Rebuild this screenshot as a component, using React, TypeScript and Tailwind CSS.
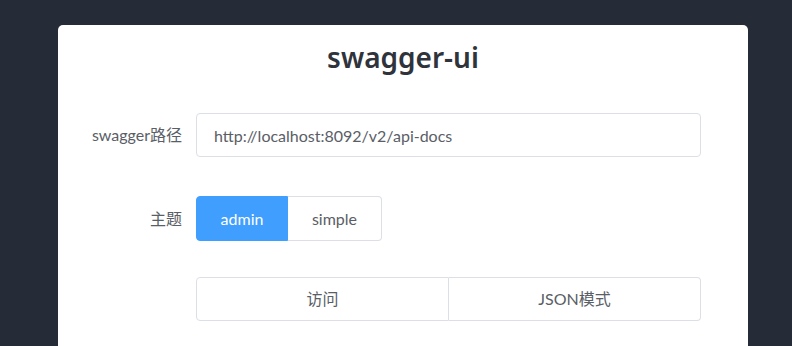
import { useState } from "react";

const font = "font-['Lato','Noto_Sans_CJK_SC',sans-serif]";

export default function App() {
  const [theme, setTheme] = useState<"admin" | "simple">("admin");
  const [url, setUrl] = useState("http://localhost:8092/v2/api-docs");

  return (
    <div className={`w-[792px] h-[346px] overflow-hidden bg-[#262c37] pt-[25px] pl-[58px] ${font}`}>
      <div className="w-[690px] h-[340px] bg-white rounded-[5px] flex flex-col">
        <h1 className="text-center text-[28px] leading-[36px] font-semibold text-[#2f333b] mt-[14px] font-['Noto_Sans',sans-serif]">
          swagger-ui
        </h1>

        <div className="flex items-center mt-[38px]">
          <label className="w-[138px] pr-[14px] text-right text-[16px] text-[#5a5e66]">swagger路径</label>
          <input
            value={url}
            onChange={(e) => setUrl(e.target.value)}
            className="w-[505px] h-[44px] px-[17px] rounded-[4px] border border-[#dcdfe6] text-[16px] text-[#5a5e66] outline-none"
          />
        </div>

        <div className="flex items-center mt-[39px]">
          <label className="w-[138px] pr-[14px] text-right text-[16px] text-[#5a5e66]">主题</label>
          <div className="flex">
            <button
              onClick={() => setTheme("admin")}
              className={`w-[92px] h-[45px] rounded-l-[4px] border text-[16px] ${
                theme === "admin"
                  ? "bg-[#409eff] border-[#409eff] text-white"
                  : "bg-white border-[#dcdfe6] text-[#5a5e66]"
              }`}
            >
              admin
            </button>
            <button
              onClick={() => setTheme("simple")}
              className={`w-[94px] h-[45px] rounded-r-[4px] border border-l-0 text-[16px] ${
                theme === "simple"
                  ? "bg-[#409eff] border-[#409eff] text-white"
                  : "bg-white border-[#dcdfe6] text-[#5a5e66]"
              }`}
            >
              simple
            </button>
          </div>
        </div>

        <div className="flex items-center mt-[36px]">
          <div className="w-[138px]" />
          <div className="flex w-[505px]">
            <button className="flex-1 h-[44px] rounded-l-[4px] border border-[#dcdfe6] text-[16px] text-[#5a5e66] bg-white">
              访问
            </button>
            <button className="flex-1 h-[44px] rounded-r-[4px] border border-l-0 border-[#dcdfe6] text-[16px] text-[#5a5e66] bg-white">
              JSON模式
            </button>
          </div>
        </div>
      </div>
    </div>
  );
}
